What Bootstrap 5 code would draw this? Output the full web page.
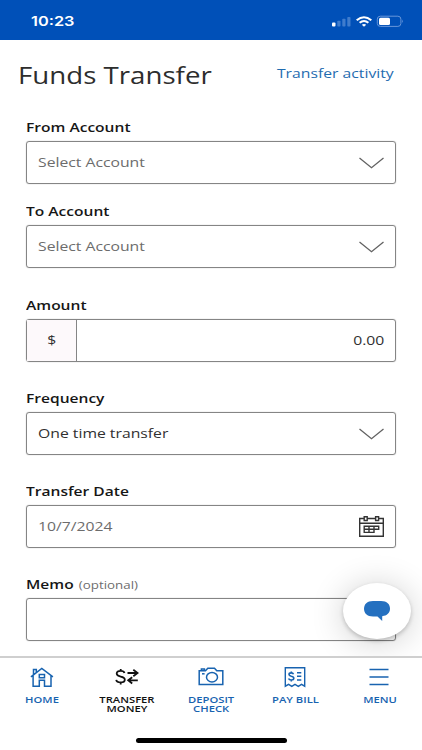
<!DOCTYPE html>
<html lang="en">
<head>
<meta charset="utf-8">
<meta name="viewport" content="width=device-width, initial-scale=1">
<title>Funds Transfer</title>
<link href="https://cdn.jsdelivr.net/npm/bootstrap@5.3.0/dist/css/bootstrap.min.css" rel="stylesheet">
<style>
body{font-family:"Open Sans","Noto Sans",sans-serif;color:#161616;background:#fff}
.screen{width:422px;height:750px}
.wide{display:inline-block;white-space:nowrap;transform:scaleX(1.183);transform-origin:left center}
.wide-end{transform-origin:right center}
.wide-mid{transform-origin:center}
.status{height:40px;background:#0050b8;font-family:Inter,sans-serif;font-weight:600;font-size:13.5px;padding:2px 18px 0 31px}
.status .wide{transform:scaleX(1.21)}
.heading-bar{height:77px;padding:0 28px 7px 18px}
.heading-bar h1{font-size:23.4px;color:#2d2d2d}
.heading-bar a{font-size:13.3px;color:#1f6cb0;padding-bottom:3px}
.fields{padding:0 26px 0 26px}
.field-label{height:24px;line-height:21px;font-size:13.3px;font-weight:600}
.field-label .wide{transform:scaleX(1.17)}
.field-label .optional{font-size:11.4px;font-weight:400;color:#6d6d6d;margin-left:1px}
.field-box{height:43px;border:1px solid #858585;border-radius:3px;padding:1px 11px 0 11px;font-size:13.3px;color:#303030;box-shadow:0 0 1px #999}
.field-box.hint{color:#6c6c6c}
.field-box.money{padding-top:0}
.gap-a{margin-bottom:17px}
.gap-to{margin-bottom:27px}
.gap-b{margin-bottom:26px}
.currency{width:50px;background:#fdf9fb;border-right:1px solid #858585}
.chat{right:11px;bottom:111px;width:68px;height:56px;box-shadow:0 2px 4px rgba(0,0,0,.2),0 3px 34px rgba(0,0,0,.2)}
.tabs{height:94px;border-top:2px solid #cfcfcf;padding-top:9px}
.tabs a{font-size:9.3px;line-height:9.2px;font-weight:600;color:#1863b0}
.tabs a.current{color:#111}
.tabs .wide{transform:scaleX(1.205)}
.tabs svg{height:24px;margin-bottom:4px}
.home-bar{width:151px;height:5px;left:136px;bottom:7px;background:#000}
</style>
<script src="https://cdn.jsdelivr.net/npm/bootstrap@5.3.0/dist/js/bootstrap.bundle.min.js"></script>
</head>
<body>
<div class="screen position-relative overflow-hidden d-flex flex-column">
  <header class="status d-flex align-items-center justify-content-between text-white flex-shrink-0">
    <span class="wide">10:23</span>
    <svg width="74" height="14" viewBox="0 0 74 14" fill="none">
      <rect x="2" y="8.5" width="3.5" height="4" rx="1" fill="#fff"/>
      <g fill="#3f7ccd"><rect x="7.3" y="6.8" width="3.2" height="5.7" rx=".8"/><rect x="12.3" y="4.8" width="3.2" height="7.7" rx=".8"/><rect x="17.3" y="3" width="3.2" height="9.5" rx=".8"/></g>
      <g stroke="#fff" stroke-width="2.1"><path d="M26.7 6.3Q34 .2 41.3 6.3"/><path d="M29.6 8.8Q34 5.2 38.4 8.8"/></g>
      <path d="M31.8 10.7Q34 9.1 36.2 10.7L34 12.7Z" fill="#fff"/>
      <rect x="47.3" y="2.2" width="23.6" height="10.2" rx="3" stroke="#6696da"/>
      <rect x="49" y="3.7" width="11" height="7.2" rx="1.5" fill="#fff"/>
      <path d="M72 5.6v3.4q1.5-1.7 0-3.4" fill="#78a3df"/>
    </svg>
  </header>
  <div class="heading-bar d-flex align-items-center justify-content-between flex-shrink-0">
    <h1 class="wide fw-normal m-0">Funds Transfer</h1>
    <a href="#" class="wide wide-end text-decoration-none">Transfer activity</a>
  </div>
  <main class="fields flex-grow-1">
    <div class="gap-a"><div class="field-label"><span class="wide">From Account</span></div>
      <div class="field-box hint d-flex align-items-center justify-content-between"><span class="wide">Select Account</span>
        <svg width="25" height="12" viewBox="0 0 25 12" fill="none" stroke="#626262" stroke-width="1.3"><path d="M.5 1 12.5 10.7 24.5 1"/></svg></div></div>
    <div class="gap-to"><div class="field-label"><span class="wide">To Account</span></div>
      <div class="field-box hint d-flex align-items-center justify-content-between"><span class="wide">Select Account</span>
        <svg width="25" height="12" viewBox="0 0 25 12" fill="none" stroke="#626262" stroke-width="1.3"><path d="M.5 1 12.5 10.7 24.5 1"/></svg></div></div>
    <div class="gap-b"><div class="field-label"><span class="wide">Amount</span></div>
      <div class="field-box money d-flex align-items-center justify-content-between ps-0"><div class="currency h-100 d-flex align-items-center justify-content-center"><span class="wide wide-mid">$</span></div><span class="wide wide-end">0.00</span></div></div>
    <div class="gap-b"><div class="field-label"><span class="wide">Frequency</span></div>
      <div class="field-box d-flex align-items-center justify-content-between"><span class="wide">One time transfer</span>
        <svg width="25" height="12" viewBox="0 0 25 12" fill="none" stroke="#626262" stroke-width="1.3"><path d="M.5 1 12.5 10.7 24.5 1"/></svg></div></div>
    <div class="gap-b"><div class="field-label"><span class="wide">Transfer Date</span></div>
      <div class="field-box money hint d-flex align-items-center justify-content-between"><span class="wide">10/7/2024</span>
        <svg width="25" height="21" viewBox="0 0 25 21" fill="none" stroke="#333" stroke-width="1.4"><path d="M5 2.5H.7V20.2H24.3V2.5H20M8.5 2.5H16.5M.7 7.2H24.3M5.2 .7H8.2V4.5H5.2ZM16.6 .7H19.6V4.5H16.6ZM5.2 10.2H19.7V13.3H15V16.4H5.2ZM5.2 13.3H15M10 10.2V16.4M15 10.2V13.3"/></svg></div></div>
    <div><div class="field-label"><span class="wide">Memo <span class="optional">(optional)</span></span></div>
      <div class="field-box"></div></div>
  </main>
  <button class="chat btn bg-white border-0 rounded-circle position-absolute p-0 d-flex align-items-center justify-content-center" aria-label="Chat">
    <svg width="26" height="20" viewBox="0 0 26 20" fill="#2470c0"><path d="M9 0H17C23 0 26 3.3 26 7.8 26 12 23 14.7 18.2 15.2V20L13.5 15.5H9C3 15.5 0 12.3 0 7.8S3 0 9 0Z"/></svg>
  </button>
  <nav class="tabs row g-0 bg-white position-relative flex-shrink-0 text-center">
    <a href="#" class="col d-flex flex-column align-items-center text-decoration-none">
      <svg width="24" viewBox="0 0 24 24" fill="none" stroke="currentColor" stroke-width="1.5"><path d="M.9 9.9 11.8 1.5 22.9 9.9M3.1 8.7V19.3H9.3V13.2H14.5V19.3H21V8.7M3.5 7.5V2.5H6.3V5.3M9.3 7.5H14.5V10.7H9.3Z"/></svg>
      <span class="wide wide-mid">HOME</span></a>
    <a href="#" class="current col d-flex flex-column align-items-center text-decoration-none">
      <svg width="24" viewBox="0 0 24 24" fill="none" stroke="currentColor" stroke-width="1.8"><path d="M9.5 5.9C9 4.3 7.5 3.9 5.7 3.9 3.2 3.9 1.7 4.9 1.7 6.6 1.7 8.3 3.2 9.1 5.7 9.6 8.3 10.1 9.8 10.9 9.8 12.7 9.8 14.5 8 15.4 5.7 15.4 3.2 15.4 1.5 14.5 1.2 12.9M5.7 1.9V3.9M5.7 15.4V17.5M12.5 6H22.6M18.3 2.8 22.6 6 18.3 9.2M22.8 13.3H13.2M17.2 10.2 13.2 13.3 17.2 16.5"/></svg>
      <span class="wide wide-mid">TRANSFER<br>MONEY</span></a>
    <a href="#" class="col d-flex flex-column align-items-center text-decoration-none">
      <svg width="26" viewBox="0 0 26 24" fill="none" stroke="currentColor" stroke-width="1.5"><path d="M1.2 3.8H7.5L9.8 1.2H16.5L18.8 3.8H24.8V17.4H1.2ZM3.4 3.6V1.9H6.4V3.6"/><ellipse cx="14" cy="10.2" rx="5.5" ry="4.7"/><path d="M4 6.8H6.6"/></svg>
      <span class="wide wide-mid">DEPOSIT<br>CHECK</span></a>
    <a href="#" class="col d-flex flex-column align-items-center text-decoration-none">
      <svg width="22" viewBox="0 0 22 24" fill="none" stroke="currentColor" stroke-width="1.4"><path d="M1.3 .7H20.7V19.2L17.5 17.4 14.3 19.4 11 17.4 7.8 19.4 4.6 17.4 1.3 19.2ZM13 5.7H17.3M13 9.3H17.3M13 13H17.3"/><path d="M9.5 7.2C9.1 6.2 8.4 5.9 7.3 5.9 5.9 5.9 5 6.5 5 7.5 5 8.6 6 9 7.3 9.3 8.8 9.6 9.8 10.1 9.8 11.3 9.8 12.4 8.8 13 7.3 13 5.8 13 4.9 12.5 4.6 11.5M7.3 4.4V5.9M7.3 13V14.5" stroke-width="1.6"/></svg>
      <span class="wide wide-mid">PAY BILL</span></a>
    <a href="#" class="col d-flex flex-column align-items-center text-decoration-none">
      <svg width="22" viewBox="0 0 22 24" fill="none" stroke="currentColor" stroke-width="1.4"><path d="M.5 2.5H19.5M.5 10H19.5M.5 17.5H19.5"/></svg>
      <span class="wide wide-mid">MENU</span></a>
    <div class="home-bar rounded-pill position-absolute"></div>
  </nav>
</div>
</body>
</html>
